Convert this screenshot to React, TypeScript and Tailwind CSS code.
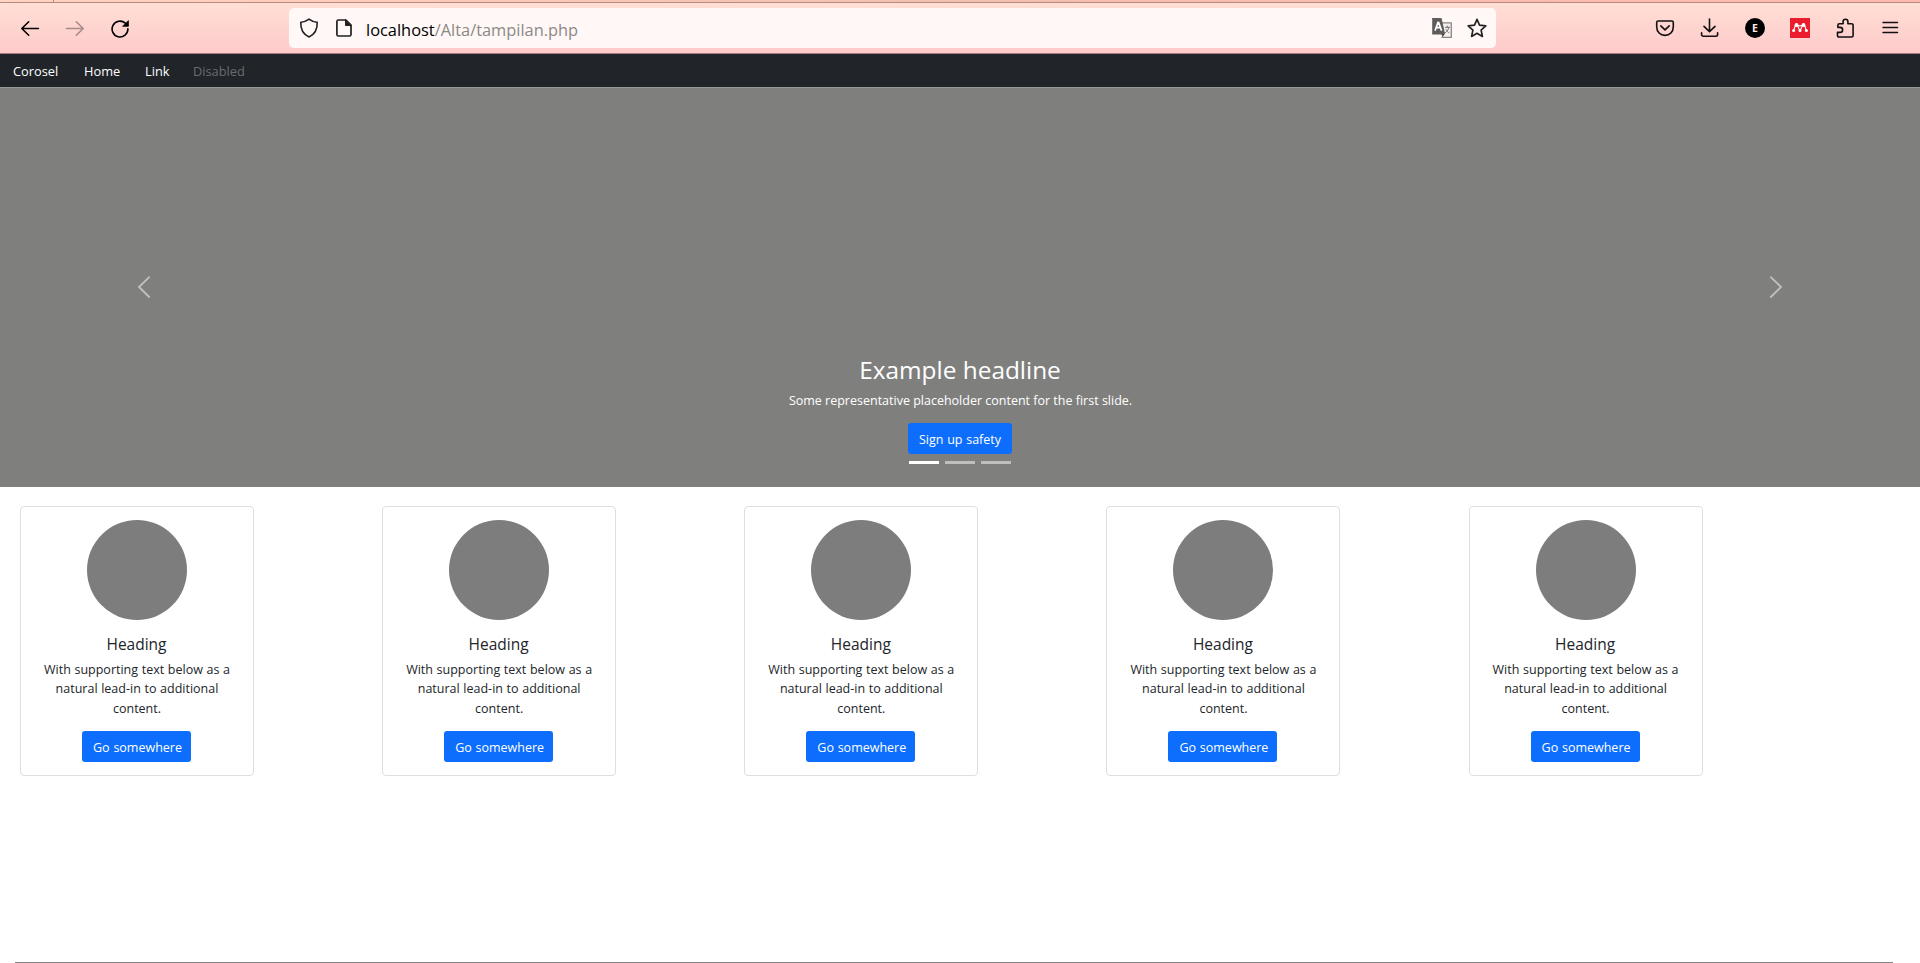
import type { ReactNode } from "react";

function Icon({ children, className = "" }: { children: ReactNode; className?: string }) {
  return (
    <svg
      viewBox="0 0 20 20"
      className={`block size-5 shrink-0 ${className}`}
      fill="none"
      stroke="currentColor"
      strokeWidth="1.6"
      strokeLinecap="round"
      strokeLinejoin="round"
    >
      {children}
    </svg>
  );
}

function Toolbar() {
  return (
    <header className="flex h-[54px] flex-col bg-[#fdd3cd]">
      <div className="flex h-[3px] shrink-0 border-b border-[#b98a80] bg-linear-to-r from-[#ffd3c0] via-[#f3bfae] to-[#ffb9b0]">
        <div className="w-[54px] border-r border-[#b98a80]" />
      </div>
      <div className="flex h-[51px] shrink-0 items-center border-b border-[#a97b7a] bg-linear-to-b from-[#ffdfd5] via-[#fed4cf] to-[#fdcccb] pl-5 pr-5 text-[#111]">
        <div className="flex gap-[25px]">
          <Icon className="text-black">
            <path d="M18.4 10.5H2M8.7 3.8 1.8 10.5l6.9 6.7" />
          </Icon>
          <Icon className="text-[#a88a88]">
            <path d="M1.6 10.5H18M11.3 3.8l6.9 6.7-6.9 6.7" />
          </Icon>
          <Icon className="text-black">
            <path d="M17.9 10.8A7.9 7.9 0 1 1 15.3 5.2" strokeWidth="1.6" />
            <path d="M18.4 3v5.3h-5.500z" fill="currentColor" strokeWidth="0.800" />
          </Icon>
        </div>
        <div className="ml-[159px] flex h-10 w-[1207px] items-center rounded-[5px] bg-[#fff8f6] pl-2.5">
          <Icon className="text-[#222]">
            <path d="M10 1.1c2.6 2 5.4 3 8.2 3.2.3 6.5-2.2 12-8.2 14.6C4 16.300 1.500 10.800 1.800 4.300 4.600 4.100 7.400 3.100 10 1.100z" strokeWidth="1.6" />
          </Icon>
          <Icon className="ml-[15px] text-[#222]">
            <path d="M4.400 2h7.600l5 5v9.500a1.500 1.500 0 0 1-1.500 1.500H4.400a1.500 1.500 0 0 1-1.500-1.500v-13A1.500 1.500 0 0 1 4.400 2z" strokeWidth="1.7" />
            <path d="M11.500 2v5.500H17z" fill="currentColor" strokeWidth="1" />
          </Icon>
          <div className="ml-[12px] whitespace-nowrap pt-[3px] text-[16.400px] leading-5 text-[#8c8887]">
            <span className="text-black">localhost</span>/Alta/tampilan.php
          </div>
          <div className="ml-auto mr-[9px] flex gap-[15px]">
            <Icon>
              <path d="M8 4.800h11.300v14.600H10" stroke="#8a8685" strokeWidth="1.300" fill="#f6efed" />
              <path d="M13.200 9.300h4.400M15.300 8v1.300M16.700 9.300c-.5 3-1.700 4.600-3.800 5.700M14 11.500c.8 1.700 1.800 2.700 3 3.300" stroke="#777" strokeWidth="1" />
              <path d="M.5.500h8.700l3.300 15.500H.5z" fill="#5e5c5b" stroke="#5e5c5b" strokeWidth="1" />
              <path d="M9.500 16h3l-1.800 3.200z" fill="#444" stroke="none" />
              <path d="M3.300 12 6 4.400h.6L9.300 12M4.400 9.600h3.800" stroke="#fff" strokeWidth="1.700" />
            </Icon>
            <Icon className="text-[#222]">
              <path d="m10 1.300 2.500 5.900 6.300.600-4.700 4.300 1.300 6.300L10 15.300l-5.400 3.100 1.300-6.300L1.200 7.800l6.300-.600z" strokeWidth="1.700" />
            </Icon>
          </div>
        </div>
        <div className="ml-auto flex gap-[25px]">
          <Icon>
            <path d="M3.200 3h13.600a1.500 1.500 0 0 1 1.500 1.500v4.200c0 5.300-3.600 8.700-8.300 8.700s-8.300-3.400-8.300-8.700V4.500A1.500 1.500 0 0 1 3.200 3z" />
            <path d="m5.800 7.800 4.200 4 4.200-4" />
          </Icon>
          <Icon>
            <path d="M9.500 1v12.300M4 8.300l5.500 5.300L15 8.300M1.600 14.800v1.700a1.700 1.700 0 0 0 1.700 1.700h12.600a1.700 1.700 0 0 0 1.700-1.700v-1.700" />
          </Icon>
          <div className="flex size-5 items-center justify-center rounded-full bg-black pt-px text-[10.500px] font-bold leading-none text-[#ffe9e4]">
            E
          </div>
          <svg viewBox="0 0 20 20" className="block size-5">
            <path fill="#eb1c2d" d="M0 0h20v20H0z" />
            <g fill="#fff">
              <circle cx="6.500" cy="7" r="1.900" />
              <circle cx="13.500" cy="7" r="1.900" />
              <circle cx="3.600" cy="12.600" r="1.500" />
              <circle cx="10" cy="12.400" r="1.500" />
              <circle cx="16.400" cy="12.600" r="1.500" />
              <path d="M5.200 7.500 4 12M7.500 7.700 9.600 12M12.500 7.700 10.400 12M14.800 7.500 16 12M8 7.200q2 1.800 4 0" fill="none" stroke="#fff" strokeWidth="1.100" />
            </g>
          </svg>
          <Icon>
            <path d="M3.500 19h13a1.600 1.600 0 0 0 1.600-1.600V7.200a1.500 1.500 0 0 0-1.500-1.500h-3.700V3.600a2.400 2.400 0 0 0-4.800 0v2.100H4.400a1.500 1.500 0 0 0-1.500 1.500v2.200h2.200a2.500 2.500 0 0 1 0 5H2.500v3.100A1.500 1.500 0 0 0 3.500 19z" />
          </Icon>
          <Icon>
            <path d="M3 4.500h14.500M3 9.500h14.500M3 14.500h14.500" strokeWidth="1.500" />
          </Icon>
        </div>
      </div>
    </header>
  );
}

function Button({ children, className }: { children: ReactNode; className: string }) {
  return (
    <button className={`h-[31px] whitespace-nowrap rounded-[3px] bg-[#0d6efd] pt-0.5 text-[12.500px] leading-[29px] text-white [word-spacing:0.500px] ${className}`}>
      {children}
    </button>
  );
}

function Carousel() {
  return (
    <section className="flex h-[400px] justify-between border-t border-[#989896] bg-[#7f7f7d] px-[134px] text-white">
      <svg viewBox="0 0 20 26" className="mt-[186px] h-[26px] w-5" fill="none" stroke="#c1c1c0" strokeWidth="1.800" strokeLinecap="round">
        <path d="M15.200 3.200 5 13l10.200 10" />
      </svg>
      <div className="flex flex-col items-center pt-[267px]">
        <h2 className="text-[24.400px] leading-[30px]">Example headline</h2>
        <p className="mt-1.5 pl-px text-[12.500px] leading-5">Some representative placeholder content for the first slide.</p>
        <Button className="mt-3 w-[104px]">Sign up safety</Button>
        <div className="mt-[7px] flex gap-1.5">
          <i className="h-[3px] w-[30px] bg-white" />
          <i className="h-[3px] w-[30px] bg-[#bfbfbe]" />
          <i className="h-[3px] w-[30px] bg-[#bfbfbe]" />
        </div>
      </div>
      <svg viewBox="0 0 20 26" className="mt-[186px] h-[26px] w-5" fill="none" stroke="#c1c1c0" strokeWidth="1.800" strokeLinecap="round">
        <path d="M4.800 3.200 15 13 4.800 23" />
      </svg>
    </section>
  );
}

function Card() {
  return (
    <article className="flex h-[270px] w-[234px] flex-col items-center rounded-[4px] border border-[#dfdfdf] pt-[13px] text-center text-[#212529]">
      <div className="size-[100px] shrink-0 rounded-full bg-[#7d7d7d]" />
      <h5 className="mt-[14px] pr-px text-[15.500px] leading-5">Heading</h5>
      <p className="mt-[6px] w-[204px] text-[12.500px] leading-[19.400px] [word-spacing:0.400px]">
        With supporting text below as a<br />natural lead-in to additional<br />content.
      </p>
      <Button className="mr-px mt-[13px] w-[109px] pl-[2px]">Go somewhere</Button>
    </article>
  );
}

export default function App() {
  return (
    <div className="flex h-[963px] flex-col overflow-hidden bg-white font-['Open_Sans','Noto_Sans',sans-serif]">
      <Toolbar />
      <nav className="flex h-[33px] shrink-0 bg-[#212529] pl-[13px] text-[12.800px] leading-[34px] text-white">
        <a className="w-[71px]">Corosel</a>
        <a className="w-[61px]">Home</a>
        <a className="w-[48px]">Link</a>
        <a className="text-[#686d72]">Disabled</a>
      </nav>
      <Carousel />
      <main className="grid grid-cols-[repeat(5,362.150px)] pl-5 pt-[19px]">
        {[0, 1, 2, 3, 4].map((n) => (
          <Card key={n} />
        ))}
      </main>
      <hr className="mb-0 ml-[15px] mr-[27px] mt-auto border-[#858585]" />
    </div>
  );
}
